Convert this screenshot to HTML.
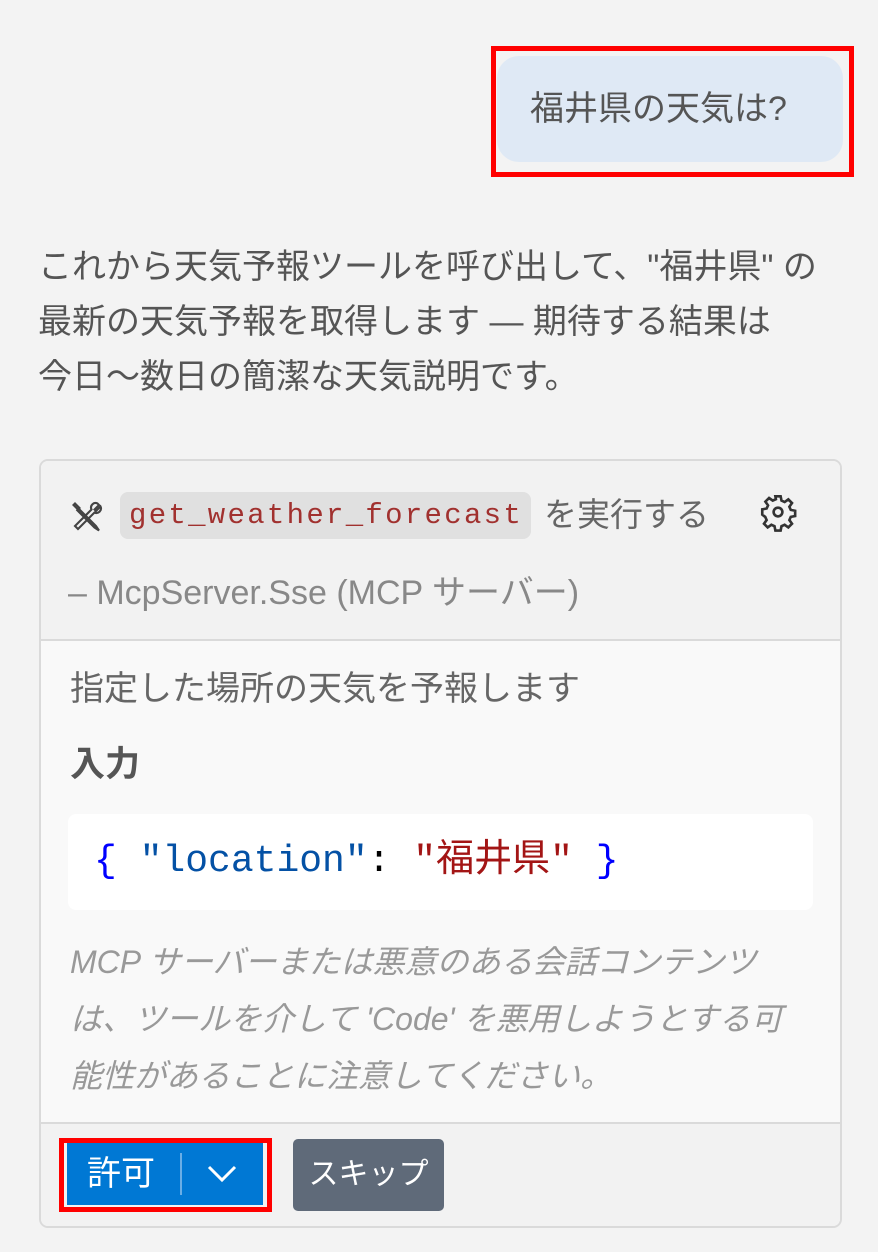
<!DOCTYPE html>
<html><head><meta charset="utf-8"><style>
*{margin:0;padding:0;box-sizing:border-box}
body{width:878px;height:1252px;background:#f3f3f3;font-family:"Liberation Sans","Noto Sans CJK JP",sans-serif;color:#555;position:relative;overflow:hidden}
.abs{position:absolute}
.red{border:5px solid #f00}
</style></head><body>
<div class="abs red" style="left:491px;top:46px;width:363px;height:131px"></div>
<div class="abs" style="left:497px;top:56px;width:346px;height:106px;background:#dfe9f5;border-radius:22px;font-size:34px;line-height:106px;padding-left:33px;color:#555;white-space:nowrap">福井県の天気は?</div>

<div class="abs" style="left:38px;top:240px;width:840px;font-size:34px;line-height:55px;color:#555;white-space:nowrap">これから天気予報ツールを呼び出して、"福井県" の<br>最新の天気予報を取得します — 期待する結果は<br>今日～数日の簡潔な天気説明です。</div>

<div class="abs" style="left:39px;top:459px;width:803px;height:769px;border:2px solid #dadada;border-radius:9px;background:#f9f9f9;overflow:hidden">
 <div style="height:180px;background:#f2f2f2;border-bottom:2px solid #dadada;position:relative">
  <svg class="abs" style="left:28px;top:38px" width="36" height="36" viewBox="0 0 24 24" fill="none" stroke="#444" stroke-width="1.4"><path d="M4 3l3 3-1 1-3-3zM6 6l12 12 2 3-3-2L5 7M20 4l-3 3 1 1 3-3a3 3 0 0 1-4 4L6 20l-2-2L15 7a3 3 0 0 1 4-4z"/></svg>
  <div class="abs" style="left:79px;top:31px;height:47px;padding:0 8px 0 9px;background:#e0e0e0;border-radius:8px;font-family:'Liberation Mono',monospace;font-size:29px;letter-spacing:2.3px;line-height:47px;color:#a1312f;white-space:nowrap">get_weather_forecast</div>
  <div class="abs" style="left:503px;top:32px;font-size:33px;line-height:44px;color:#666;white-space:nowrap">を実行する</div>
  <svg class="abs" style="left:716px;top:30px" width="42" height="42" viewBox="0 0 24 24" fill="none" stroke="#333" stroke-width="1.5"><circle cx="12" cy="12" r="2.5"/><path d="M10.5 3h3l.5 2.5 1.8.8 2.1-1.5 2.1 2.1-1.5 2.1.8 1.8 2.5.5v3l-2.5.5-.8 1.8 1.5 2.1-2.1 2.1-2.1-1.5-1.8.8-.5 2.5h-3l-.5-2.5-1.8-.8-2.1 1.5-2.1-2.1 1.5-2.1-.8-1.8L3 13.5v-3l2.5-.5.8-1.8-1.5-2.1 2.1-2.1 2.1 1.5 1.8-.8z"/></svg>
  <div class="abs" style="left:27px;top:110px;font-size:34px;line-height:44px;color:#888;white-space:nowrap">– McpServer.Sse (MCP サーバー)</div>
 </div>
 <div style="position:relative;height:481px">
  <div class="abs" style="left:29px;top:26px;font-size:34px;line-height:44px;color:#666;white-space:nowrap">指定した場所の天気を予報します</div>
  <div class="abs" style="left:29px;top:102px;font-size:35px;line-height:44px;font-weight:bold;color:#555">入力</div>
  <div class="abs" style="left:27px;top:173px;width:745px;height:96px;background:#fff;border-radius:8px;font-family:'Liberation Mono',monospace;font-size:38px;line-height:96px;padding-left:26px;white-space:pre"><span style="color:#0000ff">{</span> <span style="color:#0451a5">"location"</span><span style="color:#000">:</span> <span style="color:#a31515">"福井県"</span> <span style="color:#0000ff">}</span></div>
  <div class="abs" style="left:29px;top:293px;font-size:32px;line-height:57px;font-style:italic;color:#999;white-space:nowrap">MCP サーバーまたは悪意のある会話コンテンツ<br>は、ツールを介して 'Code' を悪用しようとする可<br>能性があることに注意してください。</div>
 </div>
 <div style="height:106px;background:#f2f2f2;border-top:2px solid #dadada;position:relative"></div>
</div>
<div class="abs red" style="left:59px;top:1138px;width:213px;height:74px"></div>
<div class="abs" style="left:67px;top:1143px;width:196px;height:62px;background:#0078d4;color:#fff;font-size:34px;line-height:62px">
 <span class="abs" style="left:20px;top:0">許可</span>
 <span class="abs" style="left:113px;top:10px;width:2px;height:42px;background:#6aaee6"></span>
 <svg class="abs" style="left:140px;top:22px" width="30" height="18" viewBox="0 0 30 18"><path d="M2 2l13 13L28 2" fill="none" stroke="#fff" stroke-width="3"/></svg>
</div>
<div class="abs" style="left:293px;top:1139px;width:151px;height:72px;background:#5f6a79;border-radius:5px;color:#fff;font-size:30px;line-height:72px;text-align:center">スキップ</div>
</body></html>
